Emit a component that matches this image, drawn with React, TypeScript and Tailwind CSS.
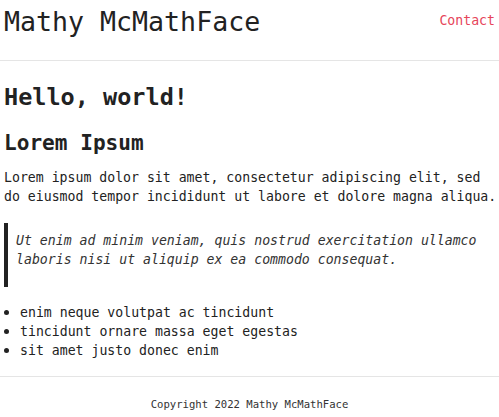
import React from 'react';

const items = ['enim neque volutpat ac tincidunt', 'tincidunt ornare massa eget egestas', 'sit amet justo donec enim'];

export default function App() {
  return (
    <div className="min-h-[417px] bg-white text-[#222] font-['DejaVu_Sans_Mono',monospace]">
      {/* header */}
      <header className="flex justify-between items-start px-[4px] pb-[16px] border-b border-[#e5e5e5]">
        <div className="text-[26.6px] leading-[44px]">Mathy McMathFace</div>
        <a href="#" className="mt-[11px] text-[13.2px] leading-[20px] text-[#e6455a]">Contact</a>
      </header>

      <main className="pl-[4px]">
        <h1 className="mt-[22px] text-[23.5px] leading-[28px] font-bold">Hello, world!</h1>
        <h2 className="mt-[19px] text-[21.1px] leading-[26px] font-bold">Lorem Ipsum</h2>
        <p className="mt-[12px] text-[13.2px] leading-[19px]">
          Lorem ipsum dolor sit amet, consectetur adipiscing elit, sed do eiusmod tempor incididunt ut labore et dolore magna aliqua.
        </p>
        <blockquote className="mt-[17px] border-l-4 border-[#222] pl-[8px] pt-[8px] pb-[18px]">
          <p className="italic text-[13.2px] leading-[19px] text-[#333]">
            Ut enim ad minim veniam, quis nostrud exercitation ullamco laboris nisi ut aliquip ex ea commodo consequat.
          </p>
        </blockquote>
        <ul className="mt-[16px] text-[13.2px] leading-[19px]">
          {items.map((t) => (
            <li key={t} className="flex items-center">
              <span className="w-[16px] flex">
                <span className="w-[4.5px] h-[4.5px] rounded-full bg-[#222]" />
              </span>
              <span>{t}</span>
            </li>
          ))}
        </ul>
      </main>

      <footer className="mt-[16px] border-t border-[#e5e5e5] pt-[19px] text-center text-[10.6px] leading-[16px] text-[#333]">
        Copyright 2022 Mathy McMathFace
      </footer>
    </div>
  );
}
